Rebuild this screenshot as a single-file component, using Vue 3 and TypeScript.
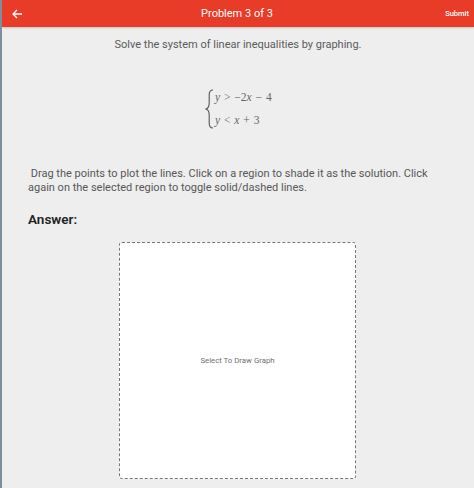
<script setup lang="ts">
const title = 'Problem 3 of 3'
</script>

<template>
  <div class="page">
    <header class="bar">
      <button class="back" aria-label="Back">
        <svg width="10" height="10" viewBox="0 0 10 10" fill="none" stroke="#fff" stroke-width="1.300">
          <path d="M10 5H1.200M5 1L1 5l4 4" />
        </svg>
      </button>
      <h1 class="title">{{ title }}</h1>
      <span class="submit">Submit</span>
    </header>
    <main class="content">
      <p class="prompt">Solve the system of linear inequalities by graphing.</p>
      <div class="system">
        <svg class="brace" width="9" height="40" viewBox="0 0 9 40" fill="none" stroke="#555" stroke-width="1.1">
          <path d="M8 1C5 1 4.2 3 4.2 6v8C4.2 17 3 19.300 1 20c2 .7 3.200 3 3.200 6v8c0 3 .8 5 3.800 5" />
        </svg>
        <div class="lines">
          <div><i>y</i> &gt; −2<i>x</i> − 4</div>
          <div><i>y</i> &lt; <i>x</i> + 3</div>
        </div>
      </div>
      <p class="instructions">&nbsp;Drag the points to plot the lines. Click on a region to shade it as the solution. Click again on the selected region to toggle solid/dashed lines.</p>
      <h2 class="answer">Answer:</h2>
      <div class="graph">Select To Draw Graph</div>
    </main>
  </div>
</template>

<style>
html, body { margin: 0; background: #eeeeee; }
</style>

<style scoped>
.page {
  width: 474px;
  height: 488px;
  overflow: hidden;
  background: #eeeeee;
  font-family: Roboto, "Liberation Sans", sans-serif;
  border-left: 2px solid #7d8f9a;
  box-sizing: border-box;
}
.bar {
  height: 27px;
  background: #e83b28;
  color: #fff;
  display: grid;
  grid-template-columns: 1fr auto 1fr;
  align-items: center;
  padding: 0 5px 0 10px;
  box-shadow: 0 1px 2px rgba(0, 0, 0, 0.2);
}
.back {
  background: none;
  border: 0;
  padding: 0;
  display: flex;
  justify-self: start;
}
.title {
  margin: 0 7px 0 0;
  font-size: 11px;
  font-weight: 400;
}
.submit {
  justify-self: end;
  font-size: 7.500px;
  font-weight: 500;
}
.content {
  display: flex;
  flex-direction: column;
}
.prompt {
  margin: 10px 0 0;
  text-align: center;
  font-size: 11px;
  line-height: 15px;
  color: #5b5b5b;
}
.system {
  margin: 35px 0 0 203px;
  display: flex;
  align-items: center;
  gap: 1px;
  height: 44px;
  color: #666;
  font-family: "Liberation Serif", serif;
  font-size: 11.500px;
  word-spacing: 1px;
}
.lines {
  display: flex;
  flex-direction: column;
  gap: 10px;
  line-height: 13px;
  white-space: pre;
}
.instructions {
  margin: 36px 0 0 26px;
  width: 405px;
  font-size: 11px;
  line-height: 14px;
  color: #575757;
}
.answer {
  margin: 17px 0 0 26px;
  font-size: 13.500px;
  line-height: 15px;
  font-weight: 600;
  color: #222;
}
.graph {
  margin: 15px 0 0 117px;
  width: 237px;
  height: 237px;
  box-sizing: border-box;
  background: #fff;
  border: 1px dashed #777;
  border-radius: 3px;
  display: flex;
  align-items: center;
  justify-content: center;
  font-size: 7.800px;
  color: #707070;
}
</style>
